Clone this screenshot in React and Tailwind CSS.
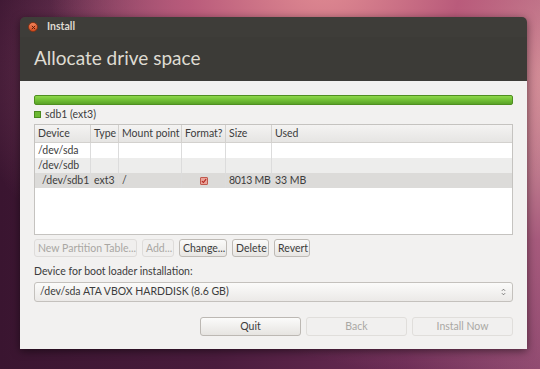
import React from 'react'

const font = { fontFamily: 'Lato, "Liberation Sans", sans-serif' }

const cols = [
  { label: 'Device', w: 'w-[56px]' },
  { label: 'Type', w: 'w-[28px]' },
  { label: 'Mount point', w: 'w-[63px]' },
  { label: 'Format?', w: 'w-[44px]' },
  { label: 'Size', w: 'w-[46px]' },
  { label: 'Used', w: 'flex-1' },
]

function Row({ cells, className }) {
  return (
    <div className={`flex h-[15px] items-center text-[10.5px] text-[#3c3c3c] ${className}`}>
      {cells.map((c, i) => (
        <div key={i} className={`${cols[i].w} h-full flex items-center px-[3px] border-r border-[#dcdcdc] last:border-r-0 whitespace-nowrap`}>
          {c}
        </div>
      ))}
    </div>
  )
}

function Check() {
  return (
    <span className="mx-auto w-[8px] h-[8px] rounded-[1px] bg-[#e9a39a] border border-[#c05a4e] flex items-center justify-center">
      <svg viewBox="0 0 8 8" className="w-[8px] h-[8px]">
        <path d="M1.2 4.2 L3.2 6 L6.8 1.5" stroke="#b3261e" strokeWidth="1.5" fill="none" />
      </svg>
    </span>
  )
}

function SmallButton({ children, disabled, className }) {
  return (
    <button
      className={`h-[18px] px-[3px] rounded-[3px] border text-[10.5px] leading-none whitespace-nowrap ${
        disabled
          ? 'border-[#dedcda] text-[#a9a7a3] bg-[#f0efee]'
          : 'border-[#bebab5] text-[#3c3c3c] bg-gradient-to-b from-[#fafaf9] to-[#e8e6e3]'
      } ${className}`}
    >
      {children}
    </button>
  )
}

function BigButton({ children, disabled }) {
  return (
    <button
      className={`w-[101px] h-[19px] rounded-[3px] border text-[10.5px] leading-none ${
        disabled
          ? 'border-[#e0dedb] text-[#aaa8a4] bg-[#f1f0ef]'
          : 'border-[#bcb8b3] text-[#3c3c3c] bg-gradient-to-b from-[#fbfbfa] to-[#e6e4e1]'
      }`}
    >
      {children}
    </button>
  )
}

export default function App() {
  return (
    <div
      className="w-[540px] h-[369px] overflow-hidden pt-[17px] pl-[20px] bg-[radial-gradient(ellipse_at_60%_-10%,#e38f94_0%,#b95b7b_30%,transparent_60%),radial-gradient(ellipse_at_105%_20%,#dfa6a4_0%,#a65a7c_40%,transparent_75%),linear-gradient(90deg,#3a1530_0%,#4a1c3d_40%,#6b2c55_75%,#8f4a70_100%)]"
      style={font}
    >
      <div className="w-[507px] h-[332px] flex flex-col rounded-t-[5px] overflow-hidden shadow-[0_2px_8px_rgba(0,0,0,0.5)]">
        <div className="h-[20px] bg-[#3e3d39] flex items-center pl-[8px] gap-[9px]">
          <span className="w-[10px] h-[10px] rounded-full bg-gradient-to-b from-[#f5845a] to-[#d44d1f] flex items-center justify-center border border-[#8a3516]">
            <svg viewBox="0 0 6 6" className="w-[5px] h-[5px]">
              <path d="M1 1 L5 5 M5 1 L1 5" stroke="#5a1d0a" strokeWidth="1.2" />
            </svg>
          </span>
          <span className="text-[10.5px] font-bold text-[#dfdbd2]">Install</span>
        </div>
        <div className="h-[44px] bg-[#3c3b37] flex items-center pl-[14px] pb-[2px]">
          <span className="text-[19px] text-[#dfdbd2]">Allocate drive space</span>
        </div>
        <div className="flex-1 bg-[#f2f1f0] px-[14px] pt-[14px] flex flex-col">
          <div className="h-[10px] rounded-[2px] border border-[#4f8f20] bg-gradient-to-b from-[#8fd84a] via-[#72c035] to-[#5aa327]" />
          <div className="flex items-center gap-[4px] mt-[3px] h-[13px] text-[10.5px] text-[#3c3c3c]">
            <span className="w-[7px] h-[7px] bg-[#6cb832] border border-[#4a8a1e]" />
            <span>sdb1 (ext3)</span>
          </div>
          <div className="mt-[3px] h-[111px] border border-[#c5c3c0] bg-white flex flex-col">
            <div className="flex h-[18px] bg-gradient-to-b from-[#f4f3f2] to-[#e6e5e3] border-b border-[#d3d1ce] text-[10.5px] text-[#3c3c3c]">
              {cols.map((c, i) => (
                <div key={i} className={`${c.w} flex items-center px-[3px] border-r border-[#d3d1ce] last:border-r-0 whitespace-nowrap`}>
                  {c.label}
                </div>
              ))}
            </div>
            <Row cells={['/dev/sda', '', '', '', '', '']} className="bg-white" />
            <Row cells={['/dev/sdb', '', '', '', '', '']} className="bg-[#ededec]" />
            <Row
              cells={[
                <span className="pl-[4px]">/dev/sdb1</span>,
                'ext3',
                '/',
                <Check />,
                <span className="tracking-[-0.3px]">8013 MB</span>,
                '33 MB',
              ]}
              className="bg-[#dcdbd9]"
            />
          </div>
          <div className="flex gap-[5px] mt-[4px]">
            <SmallButton disabled className="w-[103px]">New Partition Table...</SmallButton>
            <SmallButton disabled className="w-[32px]">Add...</SmallButton>
            <SmallButton className="w-[48px]">Change...</SmallButton>
            <SmallButton className="w-[37px]">Delete</SmallButton>
            <SmallButton className="w-[36px]">Revert</SmallButton>
          </div>
          <div className="mt-[8px] text-[10.5px] text-[#3c3c3c] h-[14px] flex items-center">
            Device for boot loader installation:
          </div>
          <div className="mt-[3px] h-[20px] rounded-[3px] border border-[#c4c1bd] bg-gradient-to-b from-[#fbfbfa] to-[#ebe9e7] flex items-center justify-between pl-[5px] pr-[6px] text-[10.5px] text-[#3c3c3c]">
            <span>/dev/sda ATA VBOX HARDDISK (8.6 GB)</span>
            <svg viewBox="0 0 6 10" className="w-[5px] h-[8px]">
              <path d="M1 3.5 L3 1.5 L5 3.5 M1 6.5 L3 8.5 L5 6.5" stroke="#5c5c5c" strokeWidth="1" fill="none" />
            </svg>
          </div>
          <div className="mt-[15px] flex justify-end gap-[5px]">
            <BigButton>Quit</BigButton>
            <BigButton disabled>Back</BigButton>
            <BigButton disabled>Install Now</BigButton>
          </div>
        </div>
      </div>
    </div>
  )
}
